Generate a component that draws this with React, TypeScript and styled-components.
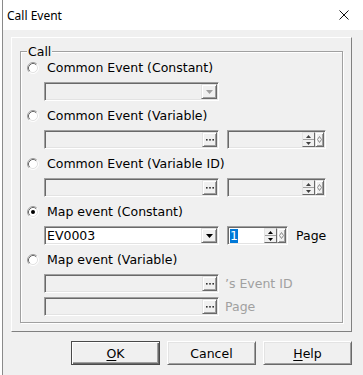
import React from "react";
import styled, { createGlobalStyle } from "styled-components";

const Global = createGlobalStyle`
  html, body { margin: 0; padding: 0; background: #ffffff; }
  body {
    font-family: "DejaVu Sans", Verdana, sans-serif;
    font-size: 12.5px;
    color: #000;
  }
  * { box-sizing: border-box; }
`;

const Window = styled.div`
  margin-left: 2px;
  width: 361px;
  height: 375px;
  border-left: 1px solid #8a8a8a;
  display: flex;
  flex-direction: column;
  overflow: hidden;
`;

const TitleBar = styled.div`
  height: 30px;
  flex: none;
  background: #fff;
  display: flex;
  align-items: center;
  justify-content: space-between;
  padding: 0 14px 0 4px;
  font-family: "Noto Sans", sans-serif;
  font-size: 12px;
  color: #000;
`;

const Body = styled.div`
  flex: 1;
  background: #f0f0f0;
  padding: 7px 0 0 8px;
  display: flex;
  flex-direction: column;
`;

const Panel = styled.div`
  width: 341px;
  border: 1px solid;
  border-color: #ffffff #808080 #808080 #ffffff;
  padding: 13px 8px 8px 8px;
`;

const Group = styled.div`
  position: relative;
  border: 1px solid #a0a0a0;
  box-shadow: inset 1px 1px 0 #ffffff, 1px 1px 0 #ffffff;
  padding: 8px 6px 6px 6px;
`;

const GroupLabel = styled.span`
  position: absolute;
  top: -8px;
  left: 6px;
  padding: 0 1px;
  background: #f0f0f0;
  line-height: 15px;
`;

const Sections = styled.div`
  display: flex;
  flex-direction: column;
  gap: 7px;
`;

const Section = styled.div`
  display: flex;
  flex-direction: column;
  gap: 6px;
`;

const Stack = styled.div`
  display: flex;
  flex-direction: column;
  gap: 4px;
`;

const RadioRow = styled.div`
  display: flex;
  align-items: center;
  gap: 8px;
  height: 16px;
  line-height: 16px;
  white-space: nowrap;
`;

const FieldRow = styled.div<{ $gap?: number }>`
  display: flex;
  align-items: center;
  gap: ${(p) => p.$gap ?? 8}px;
  margin-left: 17px;
  height: 19px;
`;

const Field = styled.div<{ $w: number; $white?: boolean }>`
  width: ${(p) => p.$w}px;
  height: 19px;
  display: flex;
  align-items: stretch;
  border: 1px solid;
  border-color: #a0a0a0 #ffffff #ffffff #a0a0a0;
  box-shadow: inset 1px 1px 0 #696969, inset -1px -1px 0 #e3e3e3;
  padding: 1px;
  background: ${(p) => (p.$white ? "#ffffff" : "#f0f0f0")};
`;

const FieldText = styled.div`
  flex: 1;
  padding-left: 1px;
  line-height: 15px;
  overflow: hidden;
  white-space: nowrap;
`;

const Selected = styled.span`
  background: #0078d7;
  color: #fff;
  display: inline-block;
  line-height: 14px;
`;

const MiniButton = styled.div<{ $w: number }>`
  width: ${(p) => p.$w}px;
  flex: none;
  display: flex;
  align-items: center;
  justify-content: center;
  background: #f0f0f0;
  border: 1px solid;
  border-color: #e3e3e3 #696969 #696969 #e3e3e3;
  box-shadow: inset 1px 1px 0 #ffffff, inset -1px -1px 0 #a0a0a0;
`;

const SpinButton = styled.div`
  width: 13px;
  flex: none;
  display: flex;
  flex-direction: column;
  background: #f0f0f0;
  border: 1px solid;
  border-color: #e3e3e3 #696969 #696969 #e3e3e3;
`;

const SpinHalf = styled.div<{ $top?: boolean }>`
  flex: 1;
  display: flex;
  align-items: center;
  justify-content: center;
  border-bottom: ${(p) => (p.$top ? "1px solid #a0a0a0" : "none")};
`;

const Label = styled.span<{ $disabled?: boolean }>`
  color: ${(p) => (p.$disabled ? "#a0a0a0" : "#000")};
  white-space: nowrap;
  line-height: 16px;
`;

const ButtonRow = styled.div`
  width: 341px;
  margin-top: 9px;
  display: flex;
  justify-content: flex-end;
  gap: 7px;
`;

const Button = styled.button<{ $default?: boolean }>`
  width: 89px;
  height: 24px;
  padding: 0;
  font-family: "DejaVu Sans", Verdana, sans-serif;
  font-size: 12.5px;
  color: #000;
  background: #f0f0f0;
  border: 1px solid;
  border-color: ${(p) =>
    p.$default ? "#4a4a4a" : "#ffffff #696969 #696969 #ffffff"};
  box-shadow: ${(p) =>
    p.$default
      ? "inset 1px 1px 0 #ffffff, inset -1px -1px 0 #696969, inset -2px -2px 0 #a0a0a0"
      : "inset 1px 1px 0 #e3e3e3, inset -1px -1px 0 #a0a0a0"};
  u { text-decoration: underline; text-underline-offset: 2px; }
`;

const Radio = ({ checked }: { checked?: boolean }) => (
  <svg width="12" height="12" viewBox="0 0 12 12" style={{ flex: "none" }}>
    <circle cx="6" cy="6" r="5" fill="#ffffff" />
    <path d="M2.11 9.89 A5.5 5.5 0 0 1 9.89 2.11" fill="none" stroke="#a0a0a0" strokeWidth="1" />
    <path d="M9.89 2.11 A5.5 5.5 0 0 1 2.11 9.89" fill="none" stroke="#ffffff" strokeWidth="1" />
    <path d="M2.82 9.18 A4.5 4.5 0 0 1 9.18 2.82" fill="none" stroke="#696969" strokeWidth="1" />
    <path d="M9.18 2.82 A4.5 4.5 0 0 1 2.82 9.18" fill="none" stroke="#e3e3e3" strokeWidth="1" />
    {checked && <circle cx="6" cy="6" r="2" fill="#000" />}
  </svg>
);

const DownTri = ({ color }: { color: string }) => (
  <svg width="7" height="4" viewBox="0 0 7 4">
    <polygon points="0,0 7,0 3.5,4" fill={color} />
  </svg>
);

const Dots = () => (
  <svg width="8" height="2" viewBox="0 0 8 2">
    <rect x="0" y="0" width="1.6" height="1.6" fill="#333" />
    <rect x="3.2" y="0" width="1.6" height="1.6" fill="#333" />
    <rect x="6.4" y="0" width="1.6" height="1.6" fill="#333" />
  </svg>
);

const Tri = ({ up, color }: { up?: boolean; color: string }) => (
  <svg width="5" height="3" viewBox="0 0 5 3">
    <polygon points={up ? "2.5,0 5,3 0,3" : "0,0 5,0 2.5,3"} fill={color} />
  </svg>
);

const Diamond = () => (
  <svg width="5" height="7" viewBox="0 0 5 7">
    <polygon points="2.5,0.5 4.5,3.5 2.5,6.5 0.5,3.5" fill="none" stroke="#8a8a8a" strokeWidth="1" />
  </svg>
);

const CloseIcon = () => (
  <svg width="10" height="10" viewBox="0 0 10 10">
    <path d="M0.5 0.5 L9.5 9.5 M9.5 0.5 L0.5 9.5" stroke="#111" strokeWidth="1" />
  </svg>
);

const Combo = ({ w, text, enabled }: { w: number; text?: string; enabled?: boolean }) => (
  <Field $w={w} $white={enabled}>
    <FieldText>{text}</FieldText>
    <MiniButton $w={16}>
      <DownTri color={enabled ? "#000" : "#a0a0a0"} />
    </MiniButton>
  </Field>
);

const Browse = ({ w }: { w: number }) => (
  <Field $w={w}>
    <FieldText />
    <MiniButton $w={15}>
      <Dots />
    </MiniButton>
  </Field>
);

const Spin = ({ w, value, enabled }: { w: number; value?: string; enabled?: boolean }) => (
  <Field $w={w} $white={enabled}>
    <FieldText>{value && <Selected>{value}</Selected>}</FieldText>
    <SpinButton>
      <SpinHalf $top>
        <Tri up color={enabled ? "#000" : "#404040"} />
      </SpinHalf>
      <SpinHalf>
        <Tri color={enabled ? "#000" : "#404040"} />
      </SpinHalf>
    </SpinButton>
    <MiniButton $w={9}>
      <Diamond />
    </MiniButton>
  </Field>
);

export default function App() {
  return (
    <>
      <Global />
      <Window>
        <TitleBar>
          <span>Call Event</span>
          <CloseIcon />
        </TitleBar>
        <Body>
          <Panel>
            <Group>
              <GroupLabel>Call</GroupLabel>
              <Sections>
                <Section>
                  <RadioRow>
                    <Radio />
                    <Label>Common Event (Constant)</Label>
                  </RadioRow>
                  <FieldRow>
                    <Combo w={175} />
                  </FieldRow>
                </Section>
                <Section>
                  <RadioRow>
                    <Radio />
                    <Label>Common Event (Variable)</Label>
                  </RadioRow>
                  <FieldRow>
                    <Browse w={175} />
                    <Spin w={99} />
                  </FieldRow>
                </Section>
                <Section>
                  <RadioRow>
                    <Radio />
                    <Label>Common Event (Variable ID)</Label>
                  </RadioRow>
                  <FieldRow>
                    <Browse w={175} />
                    <Spin w={99} />
                  </FieldRow>
                </Section>
                <Section>
                  <RadioRow>
                    <Radio checked />
                    <Label>Map event (Constant)</Label>
                  </RadioRow>
                  <FieldRow>
                    <Combo w={175} text="EV0003" enabled />
                    <Spin w={61} value="1" enabled />
                    <Label>Page</Label>
                  </FieldRow>
                </Section>
                <Section>
                  <RadioRow>
                    <Radio />
                    <Label>Map event (Variable)</Label>
                  </RadioRow>
                  <Stack>
                    <FieldRow $gap={6}>
                      <Browse w={175} />
                      <Label $disabled>’s Event ID</Label>
                    </FieldRow>
                    <FieldRow $gap={6}>
                      <Browse w={175} />
                      <Label $disabled>Page</Label>
                    </FieldRow>
                  </Stack>
                </Section>
              </Sections>
            </Group>
          </Panel>
          <ButtonRow>
            <Button $default>
              <u>O</u>K
            </Button>
            <Button>Cancel</Button>
            <Button>
              <u>H</u>elp
            </Button>
          </ButtonRow>
        </Body>
      </Window>
    </>
  );
}
